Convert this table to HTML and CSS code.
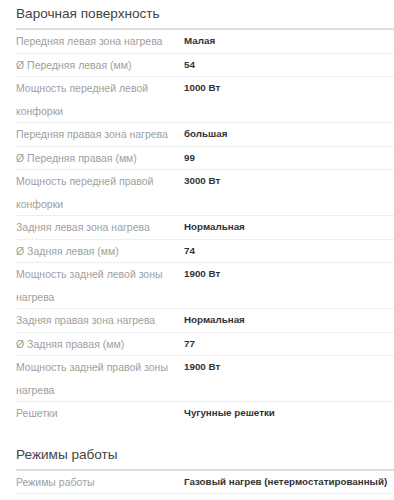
FILE: index.html
```html
<!DOCTYPE html>
<html lang="ru">
<head>
<meta charset="utf-8">
<title>Характеристики</title>
<link rel="stylesheet" href="styles.css">
</head>
<body>
<div class="specs">
  <section class="group">
    <h3 class="group-title">Варочная поверхность</h3>
    <div class="rows">
      <div class="row"><div class="label">Передняя левая зона нагрева</div><div class="value">Малая</div></div>
      <div class="row"><div class="label">Ø Передняя левая (мм)</div><div class="value">54</div></div>
      <div class="row"><div class="label">Мощность передней левой конфорки</div><div class="value">1000 Вт</div></div>
      <div class="row"><div class="label">Передняя правая зона нагрева</div><div class="value">большая</div></div>
      <div class="row"><div class="label">Ø Передняя правая (мм)</div><div class="value">99</div></div>
      <div class="row"><div class="label">Мощность передней правой конфорки</div><div class="value">3000 Вт</div></div>
      <div class="row"><div class="label">Задняя левая зона нагрева</div><div class="value">Нормальная</div></div>
      <div class="row"><div class="label">Ø Задняя левая (мм)</div><div class="value">74</div></div>
      <div class="row"><div class="label">Мощность задней левой зоны нагрева</div><div class="value">1900 Вт</div></div>
      <div class="row"><div class="label">Задняя правая зона нагрева</div><div class="value">Нормальная</div></div>
      <div class="row"><div class="label">Ø Задняя правая (мм)</div><div class="value">77</div></div>
      <div class="row"><div class="label">Мощность задней правой зоны нагрева</div><div class="value">1900 Вт</div></div>
      <div class="row"><div class="label">Решетки</div><div class="value">Чугунные решетки</div></div>
    </div>
  </section>
  <section class="group">
    <h3 class="group-title">Режимы работы</h3>
    <div class="rows">
      <div class="row"><div class="label">Режимы работы</div><div class="value">Газовый нагрев (нетермостатированный)</div></div>
    </div>
  </section>
</div>
</body>
</html>
```
FILE: styles.css
```css
html, body {
  margin: 0;
  padding: 0;
  background: #ffffff;
}
html {
  overflow: hidden;
}
body {
  font-family: "Liberation Sans", Arial, sans-serif;
  color: #333333;
}
.specs {
  padding-left: 16px;
}
.group {
  margin-bottom: 16px;
}
.group-title {
  margin: 0;
  padding-top: 4px;
  height: 24px;
  font-size: 13.6px;
  line-height: 20px;
  font-weight: normal;
  color: #444444;
  border-bottom: 2px solid #dddddd;
}
.rows {
  display: flex;
  flex-direction: column;
}
.row {
  display: grid;
  grid-template-columns: 168px 1fr;
  border-bottom: 1px solid #eeeeee;
  font-size: 10.5px;
  line-height: 22.5px;
}
.rows .row:last-child {
  border-bottom: none;
}
.group:last-child .rows .row:last-child {
  border-bottom: 1px solid #eeeeee;
}
.label {
  color: #a0a0a0;
  padding-right: 8px;
}
.value {
  color: #333333;
  font-size: 9.8px;
  font-weight: bold;
  white-space: nowrap;
}
```
